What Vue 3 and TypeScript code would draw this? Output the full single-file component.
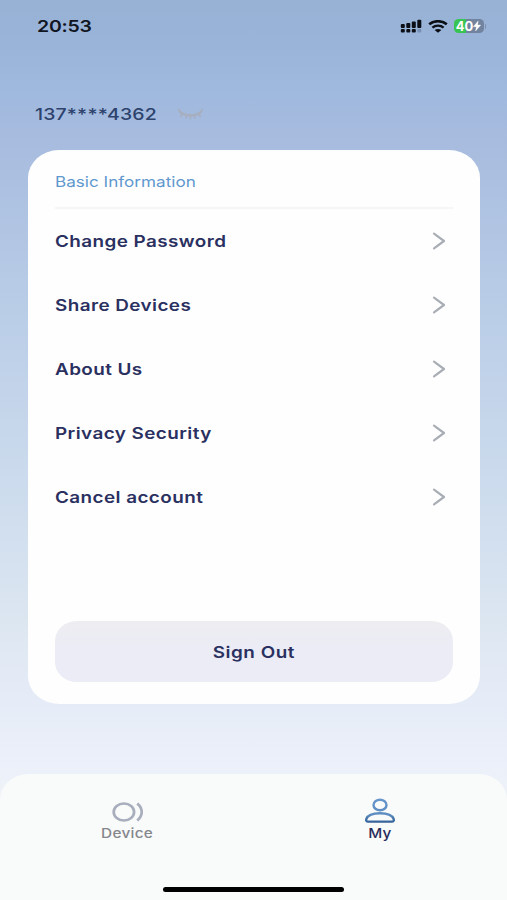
<script setup lang="ts">
interface MenuItem {
  id: string
  label: string
}

const phone = '137****4362'
const menu: MenuItem[] = [
  { id: 'password', label: 'Change Password' },
  { id: 'share', label: 'Share Devices' },
  { id: 'about', label: 'About Us' },
  { id: 'privacy', label: 'Privacy Security' },
  { id: 'cancel', label: 'Cancel account' },
]
</script>

<template>
  <div class="screen">
    <header class="status">
      <span class="wide time">20:53</span>
      <div class="indicators">
        <svg class="signal" width="22" height="14" viewBox="0 0 22 14">
          <g fill="#0b0e14">
            <rect x="0.8" y="4.9" width="4" height="4" rx="1" />
            <rect x="6.3" y="3.9" width="4" height="5" rx="1" />
            <rect x="11.8" y="2.4" width="4" height="6.5" rx="1" />
            <rect x="17.3" y="0.7" width="4" height="8.2" rx="1" />
            <rect x="0.8" y="10.1" width="4" height="3.3" rx="1" />
            <rect x="6.3" y="10.1" width="4" height="3.3" rx="1" />
            <rect x="11.8" y="10.1" width="4" height="3.3" rx="1" />
          </g>
          <rect x="17.3" y="10.1" width="4" height="3.3" rx="1" fill="#7890b5" />
        </svg>
        <svg class="wifi" width="20" height="13" viewBox="0 0 20 13" fill="none" stroke="#0b0e14">
          <path d="M1.2 4.3C6 0.2 14 0.2 18.8 4.3" stroke-width="2.6" />
          <path d="M4.4 7.6C7.5 5 12.5 5 15.6 7.6" stroke-width="2.4" />
          <path d="M10 12.7L6.6 9.9C8.6 8.6 11.4 8.6 13.4 9.9Z" fill="#0b0e14" stroke="none" />
        </svg>
        <div class="battery">
          <span class="level">40</span>
          <svg width="8" height="10" viewBox="0 0 8 10"><path d="M5.2 0L0.3 5.7H3.4L2.6 10L7.7 4.1H4.6Z" fill="#fff" stroke="#fff" stroke-width="0.4" /></svg>
        </div>
        <i class="cap"></i>
      </div>
    </header>

    <section class="account">
      <span class="wide phone">{{ phone }}</span>
      <svg class="eye" width="27" height="14" viewBox="0 0 27 14" fill="none" stroke="#a7afbf" stroke-linecap="round">
        <path d="M3 4.8C8 9.4 19 9.4 24 4.8" stroke-width="2.4" />
        <path d="M3.5 5L1.6 2.4M5.5 6.5L3.8 9.4M9.6 8L9 11M17.4 8L18 11M13.5 8.2V11.6M21.5 6.5L23.2 9.4M23.5 5L25.4 2.4" stroke-width="1.7" />
      </svg>
    </section>

    <main class="card">
      <h2 class="heading"><span class="wide">Basic Information</span></h2>
      <ul class="menu">
        <li v-for="item in menu" :key="item.id" class="row">
          <span class="wide">{{ item.label }}</span>
          <svg width="14" height="18" viewBox="0 0 14 18" fill="none" stroke="#a9aeb6" stroke-width="2.2" stroke-linejoin="round" stroke-linecap="round">
            <path d="M2 1.7L12 9L2 16.3" />
          </svg>
        </li>
      </ul>
      <button class="signout" type="button"><span class="wide">Sign Out</span></button>
    </main>

    <nav class="tabs">
      <div class="tab device">
        <svg width="32" height="22" viewBox="0 0 32 22" fill="none" stroke="#a9aebd" stroke-width="2.7">
          <ellipse cx="12.9" cy="11" rx="10.2" ry="8.5" />
          <path d="M26.2 2.6C32.2 7.2 32.2 14.6 26.2 19.5" />
        </svg>
        <span class="wide">Device</span>
      </div>
      <div class="tab my">
        <svg width="32" height="26" viewBox="0 0 32 26" fill="none" stroke="url(#person)" stroke-width="2.4">
          <defs>
            <linearGradient id="person" gradientUnits="userSpaceOnUse" x1="0" y1="1" x2="0" y2="25">
              <stop offset="0" stop-color="#6797cb" />
              <stop offset="0.65" stop-color="#5b8bc0" />
              <stop offset="1" stop-color="#315e94" />
            </linearGradient>
          </defs>
          <ellipse cx="16" cy="7" rx="6.5" ry="5.3" />
          <path d="M4.3 23.6C2.4 23.6 1.8 22.6 2.3 21C3.8 16.8 8.4 15.2 16 15.2S28.2 16.8 29.7 21C30.2 22.6 29.6 23.6 27.7 23.6Z" />
        </svg>
        <span class="wide">My</span>
      </div>
      <i class="home"></i>
    </nav>
  </div>
</template>

<style>
body {
  margin: 0;
}
</style>

<style scoped>
.screen {
  box-sizing: border-box;
  display: flex;
  flex-direction: column;
  width: 507px;
  height: 900px;
  overflow: hidden;
  font-family: Inter, "Liberation Sans", sans-serif;
  background: linear-gradient(#98b2d6 0, #9ab4d9 45px, #a0b9de 95px, #a8bcdf 145px, #bccfe8 330px, #d0deee 520px, #dce6f1 620px, #e6ecf7 700px, #ebf0fa 765px, #f0f3f7 800px);
}

/* Extended lettering used for every label */
.wide {
  display: inline-block;
  white-space: nowrap;
  transform: scaleX(1.18);
  transform-origin: left center;
}

.status {
  display: flex;
  align-items: center;
  justify-content: space-between;
  height: 52px;
  padding: 0 21px 0 37px;
}

.time {
  font-size: 16.5px;
  font-weight: 600;
  letter-spacing: -0.2px;
  color: #10151f;
}

.indicators {
  display: flex;
  align-items: center;
}

.wifi {
  margin: 0 6px 0 6px;
}

.battery {
  display: flex;
  align-items: center;
  justify-content: center;
  width: 30px;
  height: 14px;
  border-radius: 4.5px;
  color: #fff;
  background: linear-gradient(90deg, #38c452 0 12px, #71839f 12px);
}

.level {
  font-size: 13px;
  font-weight: 700;
  line-height: 14px;
}

.cap {
  width: 1.5px;
  height: 5px;
  margin-left: 1px;
  border-radius: 0 2px 2px 0;
  background: #7d90ae;
}

.account {
  display: flex;
  align-items: center;
  height: 24px;
  margin-top: 50px;
  padding-left: 35px;
}

.phone {
  width: 142px;
  font-size: 16.5px;
  font-weight: 500;
  letter-spacing: 0.12px;
  color: #2d426c;
}

.card {
  box-sizing: border-box;
  display: flex;
  flex-direction: column;
  width: 452px;
  height: 554px;
  margin: 24px 0 0 28px;
  padding: 0 27px 22px;
  border-radius: 31px / 28px;
  background: #fefefe;
}

.heading {
  box-sizing: border-box;
  display: flex;
  align-items: center;
  height: 59px;
  margin: 0;
  padding-top: 6px;
  border-bottom: 2px solid #f5f6f7;
  font-size: 14.5px;
  font-weight: 400;
  color: #5f98ce;
}

.menu {
  margin: 0;
  padding: 0;
  list-style: none;
}

.row {
  display: flex;
  align-items: center;
  justify-content: space-between;
  height: 64.1px;
  padding-right: 7px;
  font-size: 16px;
  font-weight: 600;
  letter-spacing: 0.36px;
  color: #2a3060;
}

.signout {
  flex: none;
  height: 61px;
  margin: auto 0 0;
  border: 0;
  border-radius: 22px / 20px;
  font: 600 16px Inter, "Liberation Sans", sans-serif;
  letter-spacing: 0.45px;
  color: #2a3060;
  background: linear-gradient(#ededf1, #ebecf5 45%);
}

.signout .wide {
  transform-origin: center;
}

.tabs {
  display: grid;
  grid-template-columns: 254px 252px;
  grid-template-rows: 1fr auto;
  height: 126px;
  margin-top: 70px;
  border-radius: 28px 28px 0 0 / 26px 26px 0 0;
  background: #f9fafa;
}

.tab {
  display: flex;
  flex-direction: column;
  align-items: center;
  padding-top: 24px;
}

.tab .wide {
  transform-origin: center;
  font-size: 13px;
  font-weight: 500;
  line-height: 16px;
  letter-spacing: 0.25px;
}

.tab svg {
  flex: none;
}

.device {
  color: #85878c;
}

.device svg {
  margin: 3px 0 2px;
}

.my {
  color: #2a2d5c;
}

.my svg {
  margin-bottom: 1px;
}

.home {
  grid-column: 1 / -1;
  justify-self: center;
  width: 181px;
  height: 5px;
  margin-bottom: 8px;
  border-radius: 3px;
  background: #000;
}
</style>
